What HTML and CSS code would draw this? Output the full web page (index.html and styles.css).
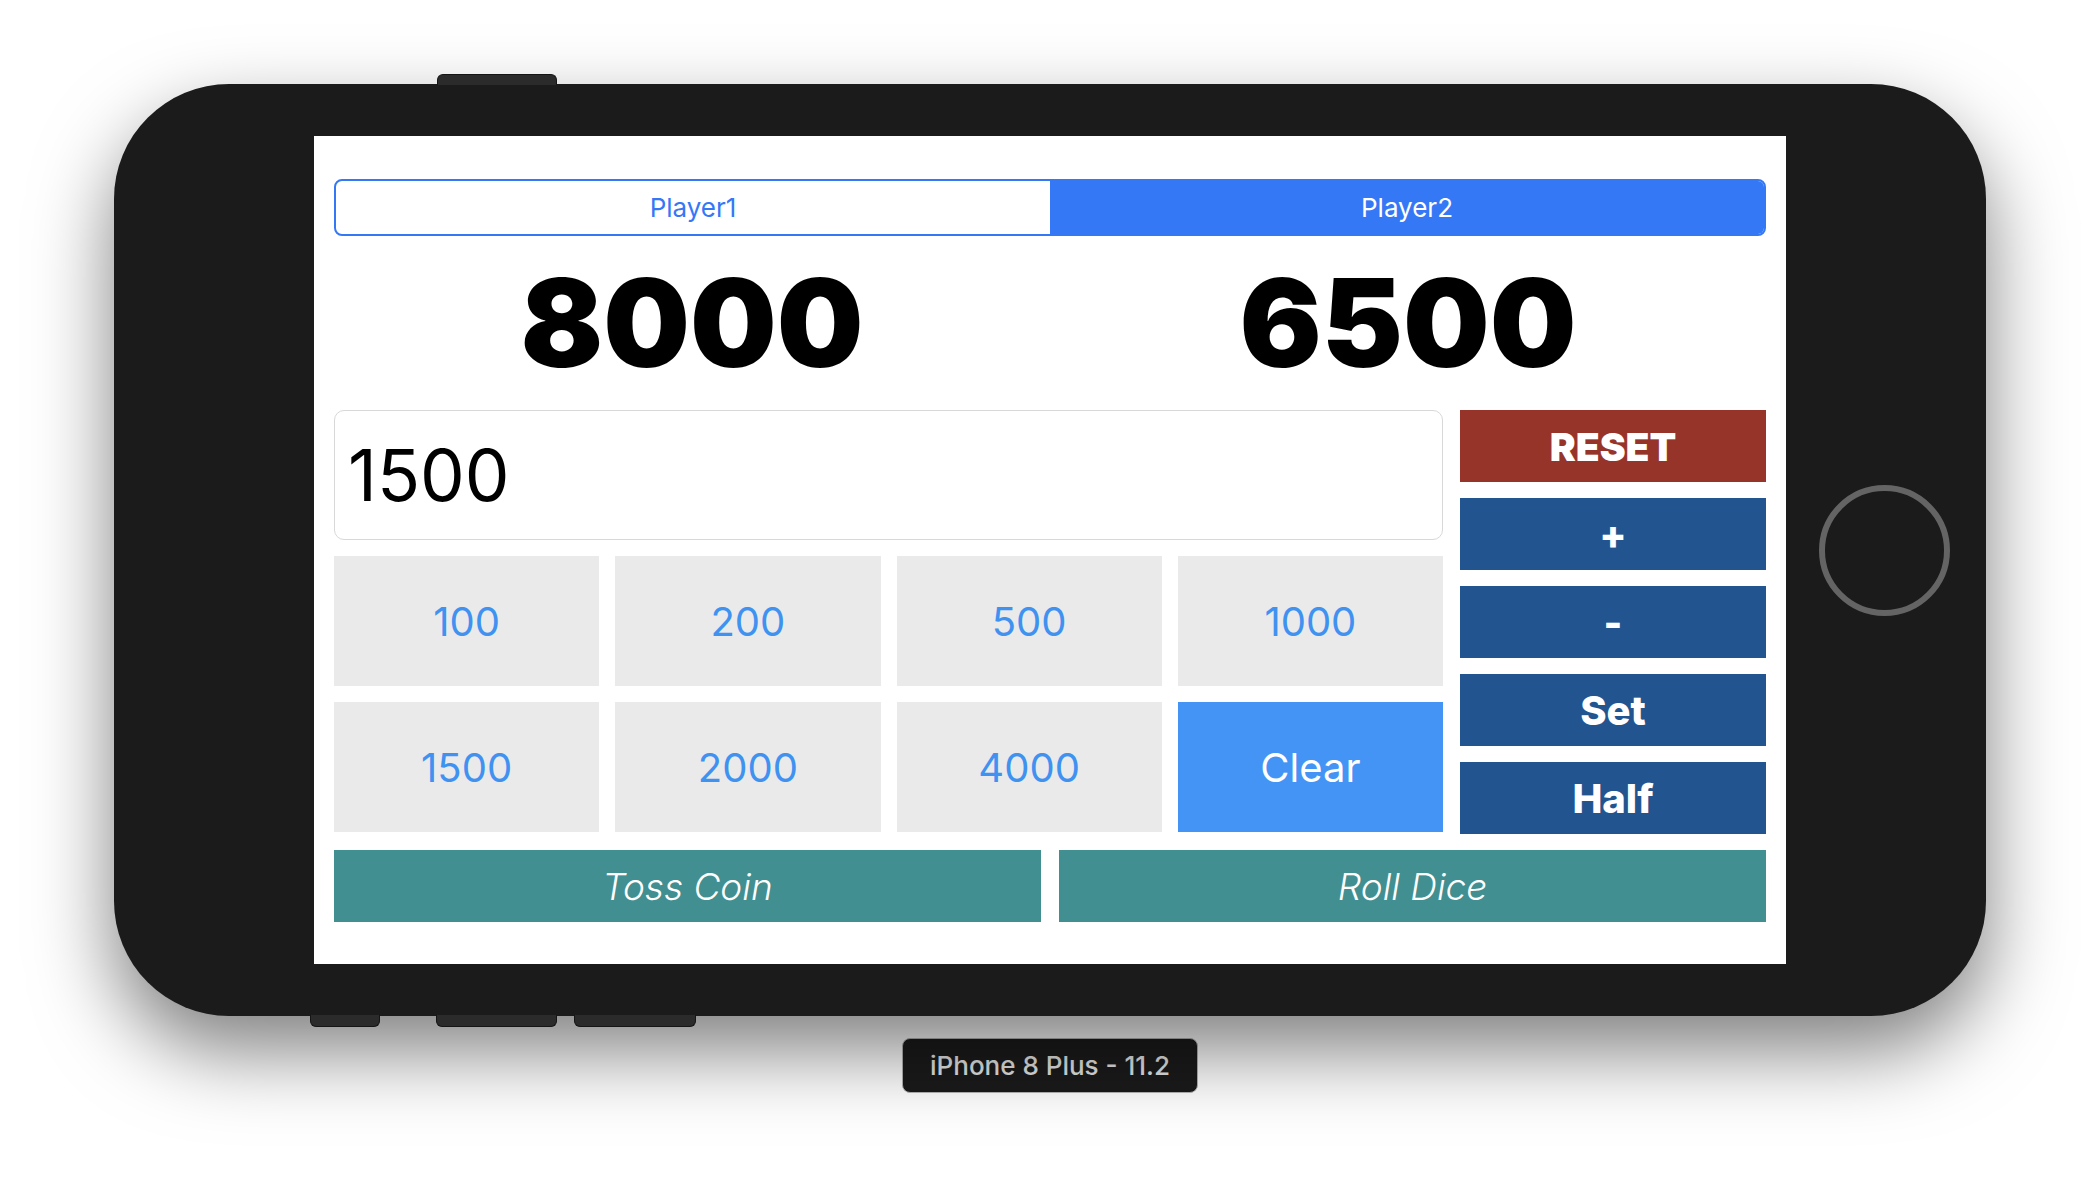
FILE: index.html
```html
<!DOCTYPE html>
<html>
<head>
<meta charset="utf-8">
<title>Life Counter</title>
<link rel="stylesheet" href="styles.css">
</head>
<body>
<div class="stage">
  <div class="phone">
    <span class="hw hw-top"></span>
    <span class="hw hw-bottom hw-b1"></span>
    <span class="hw hw-bottom hw-b2"></span>
    <span class="hw hw-bottom hw-b3"></span>
    <div class="screen">
      <div class="segmented">
        <div class="seg">Player1</div>
        <div class="seg seg-on">Player2</div>
      </div>
      <div class="scores">
        <div class="score">8000</div>
        <div class="score">6500</div>
      </div>
      <div class="main">
        <div class="left">
          <div class="input">1500</div>
          <div class="keypad">
            <div class="key">100</div>
            <div class="key">200</div>
            <div class="key">500</div>
            <div class="key">1000</div>
            <div class="key">1500</div>
            <div class="key">2000</div>
            <div class="key">4000</div>
            <div class="key key-clear">Clear</div>
          </div>
        </div>
        <div class="actions">
          <div class="act act-reset">RESET</div>
          <div class="act">+</div>
          <div class="act">-</div>
          <div class="act">Set</div>
          <div class="act">Half</div>
        </div>
      </div>
      <div class="bottom">
        <div class="wide">Toss Coin</div>
        <div class="wide">Roll Dice</div>
      </div>
    </div>
    <div class="side"><div class="home"></div></div>
  </div>
  <div class="label">iPhone 8 Plus - 11.2</div>
</div>
</body>
</html>
```

FILE: styles.css
```css
html, body {
  margin: 0;
  padding: 0;
  background: #ffffff;
}
body {
  width: 2100px;
  height: 1196px;
  overflow: hidden;
  font-family: Inter, "Noto Sans", "Liberation Sans", sans-serif;
}
.stage {
  padding-top: 84px;
  display: flex;
  flex-direction: column;
  align-items: center;
}
.phone {
  position: relative;
  width: 1872px;
  height: 932px;
  box-sizing: border-box;
  padding-left: 200px;
  border-radius: 115px;
  background: #1b1b1b;
  display: flex;
  align-items: center;
  box-shadow: 0 35px 80px rgba(0, 0, 0, 0.5);
}
.hw {
  position: absolute;
  background: #2b2b2b;
  border: 1px solid #151515;
  box-sizing: border-box;
}
.hw-top {
  left: 323px;
  top: -10px;
  width: 120px;
  height: 11px;
  border-radius: 6px 6px 0 0;
  border-bottom: none;
}
.hw-bottom {
  bottom: -11px;
  height: 12px;
  border-radius: 0 0 6px 6px;
  border-top: none;
}
.hw-b1 { left: 196px; width: 70px; }
.hw-b2 { left: 322px; width: 121px; }
.hw-b3 { left: 460px; width: 122px; }

.screen {
  width: 1472px;
  height: 828px;
  background: #ffffff;
  box-sizing: border-box;
  padding: 43px 20px 0;
  display: flex;
  flex-direction: column;
}
.segmented {
  display: flex;
  height: 57px;
  border: 2px solid #3478f6;
  border-radius: 8px;
  box-sizing: border-box;
  overflow: hidden;
}
.seg {
  flex: 1;
  display: flex;
  align-items: center;
  justify-content: center;
  font-size: 26px;
  color: #3478f6;
}
.seg-on {
  background: #3478f6;
  color: #ffffff;
}
.scores {
  height: 174px;
  display: flex;
  align-items: center;
}
.score {
  flex: 1;
  text-align: center;
  font-size: 122px;
  line-height: 1;
  font-weight: 900;
  color: #000000;
}
.main {
  display: grid;
  grid-template-columns: 1fr 306px;
  column-gap: 17px;
}
.left {
  display: flex;
  flex-direction: column;
  gap: 16px;
}
.input {
  height: 130px;
  box-sizing: border-box;
  border: 1px solid #d8d8d8;
  border-radius: 10px;
  display: flex;
  align-items: center;
  padding-left: 13px;
  font-size: 71px;
  color: #000000;
}
.keypad {
  display: grid;
  grid-template-columns: repeat(4, 1fr);
  grid-template-rows: 130px 130px;
  gap: 16px;
}
.key {
  background: #eaeaea;
  color: #4092f1;
  font-size: 40px;
  display: flex;
  align-items: center;
  justify-content: center;
}
.key-clear {
  background: #4394f5;
  color: #ffffff;
}
.actions {
  display: grid;
  grid-template-rows: repeat(5, 72px);
  gap: 16px;
}
.act {
  background: #22558f;
  color: #ffffff;
  font-size: 40px;
  font-weight: 800;
  display: flex;
  align-items: center;
  justify-content: center;
}
.act-reset {
  background: #96342a;
  font-weight: 900;
  font-size: 39px;
}
.bottom {
  margin-top: 16px;
  display: grid;
  grid-template-columns: 1fr 1fr;
  column-gap: 18px;
}
.wide {
  height: 72px;
  background: #418f91;
  color: #ffffff;
  font-size: 37px;
  font-weight: 300;
  font-style: italic;
  display: flex;
  align-items: center;
  justify-content: center;
}
.side {
  flex: 1;
  display: flex;
  align-items: center;
  justify-content: center;
  padding-right: 4px;
}
.home {
  width: 131px;
  height: 131px;
  box-sizing: border-box;
  border: 6px solid #646464;
  border-radius: 50%;
}
.label {
  margin-top: 22px;
  height: 55px;
  box-sizing: border-box;
  padding: 0 27px;
  display: flex;
  align-items: center;
  background: #1b1b1b;
  border: 1px solid #b5b5b5;
  border-radius: 8px;
  color: #e8e8e8;
  font-size: 26px;
  font-weight: 500;
}
```
